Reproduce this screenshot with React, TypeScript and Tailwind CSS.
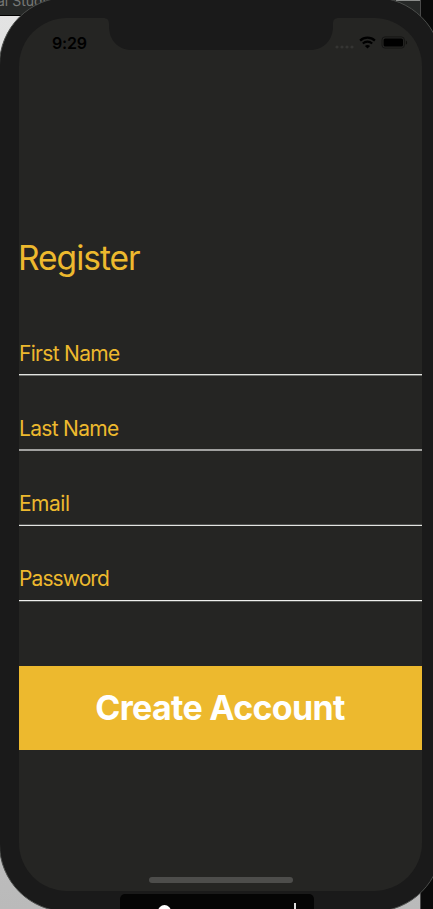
const fields = [
  { label: "First Name", track: "tracking-[-0.7px]", pad: "pt-[3px]", row: "h-[75px]", line: "bg-[#e2e4e1]", under: "bg-[#70726f]" },
  { label: "Last Name", track: "tracking-[-0.7px]", pad: "pt-[3px]", row: "h-[75px]", line: "bg-[#a1a19f]", under: "bg-[#a1a19f]" },
  { label: "Email", track: "tracking-[-0.5px]", pad: "pt-[3px]", row: "h-[76px]", line: "bg-[#50514f]", under: "bg-[#e2e4e1]" },
  { label: "Password", track: "tracking-[-0.9px]", pad: "pt-[2px]", row: "h-[75px]", line: "bg-[#f0f0ee]", under: "bg-[#555754]" },
];

function Desktop() {
  return (
    <div className="flex h-full w-full bg-[#0b0b0b]">
      <div className="flex w-[420px] flex-col">
        <div className="flex h-[15px] justify-between overflow-hidden bg-[#262827] text-[#777977]">
          <span className="-ml-[3px] -mt-[8px] whitespace-nowrap text-[14px] leading-[17px]">al Studio</span>
          <span className="h-px w-6 bg-[#8b8d8b]" />
        </div>
        <div className="h-px bg-black" />
        <div className="flex-1 bg-linear-to-b from-[#e3e3e3] to-[#bababa]" />
      </div>
      <div className="w-px bg-[#4a4a4a]" />
    </div>
  );
}

function StatusBar() {
  return (
    <div className="flex h-[50px] items-start justify-between pl-[33px] pr-[14px] pt-[15px] text-black">
      <span className="mt-px text-[16px] font-semibold leading-[18px] tracking-[-0.2px]">9:29</span>
      <div className="flex h-[19px] items-center">
        <svg className="mt-[8px]" width="20" height="4" viewBox="0 0 20 4" fill="#353533">
          <circle cx="2" cy="2" r="1.6" />
          <circle cx="7" cy="2" r="1.6" />
          <circle cx="12" cy="2" r="1.6" />
          <circle cx="17" cy="2" r="1.6" />
        </svg>
        <svg className="ml-[4px]" width="17" height="13" viewBox="0 0 17 13" fill="none">
          <path d="M1.1 4.6C5.2.6 11.8.6 15.9 4.6" stroke="black" strokeWidth="2.2" />
          <path d="M3.8 7.4C6.4 5 10.6 5 13.2 7.4" stroke="black" strokeWidth="2.1" />
          <path d="M8.5 12.6 5.9 10C7.3 8.7 9.7 8.7 11.1 10Z" fill="black" />
        </svg>
        <svg className="ml-[5px]" width="27" height="13" viewBox="0 0 27 13">
          <rect x="1" y="0.9" width="22.4" height="11.2" rx="3" fill="none" stroke="#161615" strokeWidth="1" />
          <rect x="2.6" y="2.5" width="19.4" height="8" rx="1.6" fill="black" />
          <path d="M24.8 4.4c1.8.6 1.8 3.6 0 4.2Z" fill="#11110f" />
        </svg>
      </div>
    </div>
  );
}

function Phone() {
  return (
    <div className="h-[915px] w-[443px] rounded-[68px] border border-[#4b4d4b] bg-[#1a1a1a] pl-[19px] pt-[20px]">
      <div className="relative flex h-[873px] w-[403px] flex-col overflow-hidden rounded-[48px] bg-[#252523]">
        <svg className="absolute left-[84px] top-0" width="236" height="32" viewBox="0 0 236 32" fill="#1a1a1a">
          <path d="M0 0C4.500 0 6 2 6 6V8C6 22 15 32 29 32H207C221 32 230 22 230 8V6C230 2 231.500 0 236 0Z" />
        </svg>
        <StatusBar />
        <h1 className="-ml-px mt-[168px] h-[44px] text-[33.500px] leading-[44px] tracking-[-1px] text-[#edb92e]">Register</h1>
        <form className="mt-[57px] flex flex-col text-[#edb92e]">
          {fields.map((f) => (
            <div key={f.label} className={f.row}>
              <label className={`block h-[37px] text-[21px] leading-[27px] ${f.pad} ${f.track}`}>{f.label}</label>
              <div className={`h-px ${f.line}`} />
              <div className={`h-px ${f.under}`} />
            </div>
          ))}
        </form>
        <button className="mt-[28px] h-[84px] shrink-0 bg-[#edb92e] pr-px text-center text-[34px] font-bold leading-[84px] tracking-[-0.7px] text-white">
          Create Account
        </button>
        <div className="mx-auto mb-[8px] mt-auto h-[6px] w-[144px] rounded-full bg-[#4d4d4b]" />
      </div>
    </div>
  );
}

export default function App() {
  return (
    <div className="relative h-[909px] w-[433px] overflow-hidden bg-black font-['Inter','Liberation_Sans',sans-serif]">
      <Desktop />
      <div className="absolute -left-px -top-[3px]">
        <Phone />
      </div>
      <div className="absolute left-[120px] top-[894px] flex h-[15px] w-[194px] items-start overflow-hidden rounded-t-[5px] bg-[#050505]">
        <span className="ml-[38px] mt-[11px] h-[13px] w-[13px] shrink-0 rounded-full bg-white" />
        <span className="ml-[123px] mt-[9px] h-[6px] w-[2px] bg-[#dedede]" />
      </div>
    </div>
  );
}
